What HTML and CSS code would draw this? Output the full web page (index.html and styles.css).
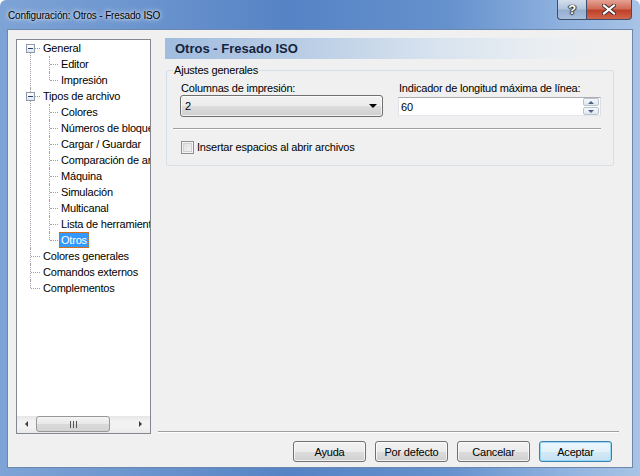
FILE: index.html
```html
<!DOCTYPE html>
<html lang="es">
<head>
    <meta charset="UTF-8">
    <title>Configuración: Otros - Fresado ISO</title>
    <link rel="stylesheet" href="styles.css">
</head>
<body>
    <div class="window">
        <div class="titlebar">
            <span class="title">Configuración: Otros - Fresado ISO</span>
            <div class="caption-buttons">
                <span class="cap-btn help">?</span>
                <span class="cap-btn close">
                    <svg width="14" height="11" viewBox="0 0 14 11">
                        <path d="M2 1.5 L12 9.5 M12 1.5 L2 9.5" stroke="#3b2a2a" stroke-width="4" stroke-linecap="square"/>
                        <path d="M2 1.5 L12 9.5 M12 1.5 L2 9.5" stroke="#ffffff" stroke-width="2.2" stroke-linecap="square"/>
                    </svg>
                </span>
            </div>
        </div>

        <div class="client">
            <div class="main">
                <div class="tree-box">
                    <ul class="tree">
                        <li>
                            <div class="row"><span class="exp"></span><span class="text">General</span></div>
                            <ul>
                                <li><div class="row"><span class="text">Editor</span></div></li>
                                <li><div class="row"><span class="text">Impresión</span></div></li>
                            </ul>
                        </li>
                        <li>
                            <div class="row"><span class="exp"></span><span class="text">Tipos de archivo</span></div>
                            <ul>
                                <li><div class="row"><span class="text">Colores</span></div></li>
                                <li><div class="row"><span class="text">Números de bloque</span></div></li>
                                <li><div class="row"><span class="text">Cargar / Guardar</span></div></li>
                                <li><div class="row"><span class="text">Comparación de archivos</span></div></li>
                                <li><div class="row"><span class="text">Máquina</span></div></li>
                                <li><div class="row"><span class="text">Simulación</span></div></li>
                                <li><div class="row"><span class="text">Multicanal</span></div></li>
                                <li><div class="row"><span class="text">Lista de herramientas</span></div></li>
                                <li class="selected"><div class="row"><span class="text">Otros</span></div></li>
                            </ul>
                        </li>
                        <li><div class="row"><span class="text">Colores generales</span></div></li>
                        <li><div class="row"><span class="text">Comandos externos</span></div></li>
                        <li><div class="row"><span class="text">Complementos</span></div></li>
                    </ul>
                    <div class="hscroll">
                        <span class="sb-arrow left"></span>
                        <div class="sb-track">
                            <div class="sb-thumb"><span class="grip"></span></div>
                        </div>
                        <span class="sb-arrow right"></span>
                    </div>
                </div>

                <div class="page">
                    <div class="page-header">Otros - Fresado ISO</div>
                    <fieldset class="group">
                        <legend>Ajustes generales</legend>
                        <div class="fields">
                            <div class="field">
                                <label>Columnas de impresión:</label>
                                <div class="combo">
                                    <span>2</span>
                                    <span class="combo-arrow"></span>
                                </div>
                            </div>
                            <div class="field">
                                <label>Indicador de longitud máxima de línea:</label>
                                <div class="spin-edit">
                                    <span class="value">60</span>
                                    <div class="spinner">
                                        <span class="spin up"></span>
                                        <span class="spin down"></span>
                                    </div>
                                </div>
                            </div>
                        </div>
                        <div class="sep"></div>
                        <label class="check"><span class="box"></span>Insertar espacios al abrir archivos</label>
                    </fieldset>
                    <div class="page-sep"></div>
                </div>
            </div>

            <div class="footer">
                <button class="btn">Ayuda</button>
                <button class="btn">Por defecto</button>
                <button class="btn">Cancelar</button>
                <button class="btn default">Aceptar</button>
            </div>
        </div>
    </div>
</body>
</html>
```

FILE: styles.css
```css
* {
    box-sizing: border-box;
}

body {
    margin: 0;
    font-family: 'Liberation Sans', Arial, sans-serif;
    font-size: 11px;
    letter-spacing: -0.2px;
    color: #000;
    background: #fff;
}

.window {
    width: 640px;
    height: 476px;
    display: flex;
    flex-direction: column;
    padding: 0 7px 8px 7px;
    background: linear-gradient(90deg, #7ea3d6 0%, #6d96cf 20%, #5683c5 45%, #6591cd 70%, #8fb2df 88%, #a8c3e5 100%);
    border-radius: 6px 6px 0 0;
}

/* title bar */
.titlebar {
    height: 29px;
    display: flex;
    justify-content: space-between;
    align-items: flex-start;
    margin-right: 1px;
}

.title {
    font-size: 10px;
    letter-spacing: -0.15px;
    line-height: 13px;
    margin: 9px 0 0 1px;
    text-shadow: 0 0 6px rgba(255,255,255,0.9), 0 0 3px rgba(255,255,255,0.8);
}

.caption-buttons {
    display: flex;
}

.cap-btn {
    height: 20px;
    display: flex;
    align-items: center;
    justify-content: center;
    border: 1px solid #3d4f6b;
    border-top: none;
}

.help {
    width: 29px;
    border-right: none;
    border-radius: 0 0 0 4px;
    background: linear-gradient(#d3deec 0%, #b4c5dc 45%, #98aed0 55%, #a9bfdd 100%);
    color: #fff;
    font-weight: bold;
    font-size: 13px;
    text-shadow: 0 0 1px #233, 1px 0 1px #233, -1px 0 1px #233, 0 1px 1px #233;
}

.close {
    width: 46px;
    border-radius: 0 0 4px 0;
    background: linear-gradient(#e5a294 0%, #d06d58 45%, #c0402a 55%, #d0664c 100%);
}

/* client area */
.client {
    flex: 1;
    display: flex;
    flex-direction: column;
    background: #f0f0f0;
    border: 1px solid #6d88ad;
    padding: 9px 20px 5px 8px;
}

.main {
    display: flex;
    height: 395px;
}

/* tree */
.tree-box {
    width: 135px;
    display: flex;
    flex-direction: column;
    background: #fff;
    border: 1px solid #828790;
}

.tree,
.tree ul {
    list-style: none;
    margin: 0;
    padding: 0;
}

.tree {
    flex: 1;
    overflow: hidden;
    white-space: nowrap;
}

.tree li {
    position: relative;
}

.tree li::before {
    content: "";
    position: absolute;
    left: 13px;
    top: 0;
    bottom: 0;
    border-left: 1px dotted #a0a0a0;
}

.tree > li:first-child::before {
    top: 8px;
}

.tree li:last-child::before {
    bottom: auto;
    height: 8px;
}

.tree li::after {
    content: "";
    position: absolute;
    left: 14px;
    top: 8px;
    width: 9px;
    border-top: 1px dotted #a0a0a0;
}

.tree ul li::before {
    left: 32px;
}

.tree ul li::after {
    left: 33px;
    width: 8px;
}

.row {
    height: 16px;
    display: flex;
    align-items: center;
    padding-left: 24px;
}

.tree ul .row {
    padding-left: 42px;
}

.text {
    padding: 0 1px;
    line-height: 14px;
    border: 1px solid transparent;
}

.selected .text {
    background: #3399ff;
    color: #fff;
    border: 1px dotted #cc6a1a;
}

.exp {
    position: absolute;
    left: 9px;
    top: 4px;
    width: 9px;
    height: 9px;
    z-index: 1;
    border: 1px solid #8e9aa8;
    background: linear-gradient(#ffffff, #e2e6ec);
}

.exp::after {
    content: "";
    position: absolute;
    left: 1px;
    top: 3px;
    width: 5px;
    height: 1px;
    background: #23416e;
}

/* horizontal scrollbar */
.hscroll {
    height: 17px;
    display: flex;
    background: linear-gradient(#e6e6e6, #f2f2f2 30%, #f2f2f2 70%, #e8e8e8);
}

.sb-arrow {
    width: 17px;
    position: relative;
}

.sb-arrow::after {
    content: "";
    position: absolute;
    top: 5px;
    border-top: 3px solid transparent;
    border-bottom: 3px solid transparent;
}

.sb-arrow.left::after {
    left: 8px;
    border-right: 3px solid #3c3c3c;
}

.sb-arrow.right::after {
    left: 6px;
    border-left: 3px solid #3c3c3c;
}

.sb-track {
    flex: 1;
    padding: 0 0 0 2px;
}

.sb-thumb {
    width: 74px;
    height: 16px;
    margin-top: 0;
    border: 1px solid #989898;
    border-radius: 3px;
    background: linear-gradient(#f4f4f4 0%, #e8e8e8 50%, #d9d9d9 51%, #d4d4d4 100%);
    display: flex;
    align-items: center;
    justify-content: center;
}

.grip {
    width: 7px;
    height: 7px;
    background: repeating-linear-gradient(90deg, #555 0 1px, transparent 1px 3px);
}

/* right page */
.page {
    flex: 1;
    display: flex;
    flex-direction: column;
    padding-left: 14px;
}

.page-header {
    height: 21px;
    margin-top: -1px;
    padding-left: 10px;
    line-height: 21px;
    font-size: 13px;
    font-weight: bold;
    letter-spacing: 0;
    color: #14243d;
    background: linear-gradient(90deg, #a0bcde 0%, #b9cde5 30%, #d8e3ef 60%, #ebeff3 85%, #f0f0f0 100%);
}

.group {
    margin: 5px 5px 0 1px;
    padding: 0 12px 11px 6px;
    border: 1px solid #d5dfe5;
    border-radius: 3px;
    min-width: 0;
}

.group legend {
    padding: 0 1px;
    line-height: 13px;
}

.fields {
    display: flex;
    gap: 15px;
    margin: 5px 0 0 7px;
}

.field {
    width: 203px;
    display: flex;
    flex-direction: column;
}

.field label {
    line-height: 13px;
    padding-left: 1px;
}

.combo {
    height: 22px;
    display: flex;
    align-items: center;
    justify-content: space-between;
    padding: 0 5px 0 4px;
    border: 1px solid #707070;
    border-radius: 3px;
    background: linear-gradient(#f2f2f2 0%, #ebebeb 50%, #dddddd 51%, #cfcfcf 100%);
    box-shadow: inset 0 0 0 1px rgba(255,255,255,0.7);
}

.combo-arrow {
    border-left: 4px solid transparent;
    border-right: 4px solid transparent;
    border-top: 4px solid #000;
}

.spin-edit {
    height: 19px;
    margin-top: 2px;
    display: flex;
    align-items: center;
    justify-content: space-between;
    padding: 0 1px 0 2px;
    background: #fff;
    border: 1px solid #abadb3;
    border-top-color: #abadb3;
    border-left-color: #e2e3ea;
    border-right-color: #dbdfe6;
    border-bottom-color: #e3e9ef;
}

.spinner {
    width: 16px;
    height: 17px;
    display: flex;
    flex-direction: column;
    gap: 1px;
}

.spin {
    flex: 1;
    position: relative;
    border: 1px solid #b9c3cf;
    border-radius: 2px;
    background: linear-gradient(#f6f8fa, #e1e6ec);
}

.spin::after {
    content: "";
    position: absolute;
    left: 4px;
    top: 2px;
    border-left: 3px solid transparent;
    border-right: 3px solid transparent;
}

.spin.up::after {
    border-bottom: 3px solid #4a6086;
}

.spin.down::after {
    border-top: 3px solid #4a6086;
}

.sep {
    height: 2px;
    margin: 11px 0 0 0;
    border-top: 1px solid #a0a0a0;
    border-bottom: 1px solid #fff;
}

.check {
    display: flex;
    align-items: center;
    gap: 3px;
    margin: 11px 0 0 8px;
    line-height: 13px;
}

.box {
    width: 13px;
    height: 13px;
    border: 1px solid #8e8f8f;
    background: linear-gradient(135deg, #dcdcdc, #f6f6f6);
    box-shadow: inset 0 0 0 1px #f4f4f4, inset 0 0 0 2px #d0d0d0;
}

.page-sep {
    margin-top: auto;
    margin-bottom: 1px;
    margin-left: -7px;
    height: 2px;
    border-top: 1px solid #a0a0a0;
    border-bottom: 1px solid #fff;
}

/* footer buttons */
.footer {
    display: flex;
    justify-content: flex-end;
    gap: 9px;
    margin-top: 7px;
}

.btn {
    width: 73px;
    height: 21px;
    padding: 0;
    font-family: inherit;
    font-size: 11px;
    letter-spacing: -0.2px;
    color: #000;
    border: 1px solid #707070;
    border-radius: 3px;
    background: linear-gradient(#f2f2f2 0%, #ebebeb 50%, #dddddd 51%, #cfcfcf 100%);
    box-shadow: inset 0 0 0 1px rgba(255,255,255,0.75);
}

.btn.default {
    border-color: #3c7fb1;
    background: linear-gradient(#eef7fc 0%, #e3f1fa 50%, #d3e9f6 51%, #c6e1f3 100%);
    box-shadow: inset 0 0 0 1px #9ad7f4;
}
```
